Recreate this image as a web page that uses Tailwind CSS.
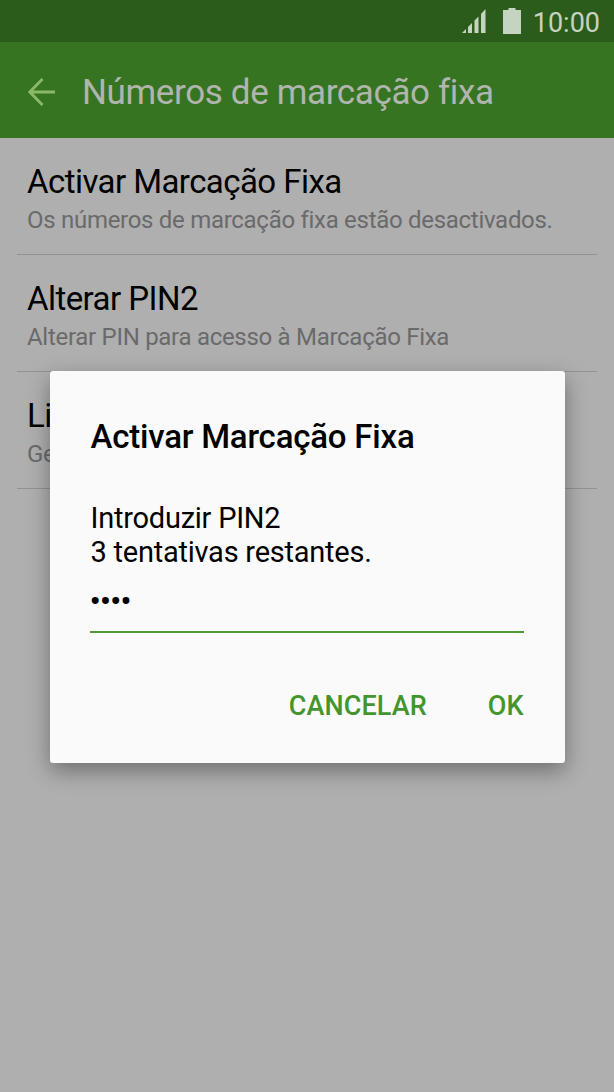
<!DOCTYPE html>
<html lang="pt">
<head>
<meta charset="utf-8">
<script src="https://cdn.jsdelivr.net/npm/@tailwindcss/browser@4"></script>
</head>
<body class="bg-[#afafaf] font-['Roboto',sans-serif] text-black">
<div class="relative h-[1092px] w-[614px] overflow-hidden">
  <div class="flex h-[42px] items-center justify-end bg-[#2b5c1b] pr-[14px] text-[#c5d4c0]">
    <svg class="mr-[17px] h-6 w-6" viewBox="0 0 24 24" fill="currentColor"><path d="M0 24l4-4v4zM6 24v-6l4-4v10zM12.500 24V11.500l4-4V24zM19 24V5l4.500-5v24z"/></svg>
    <svg class="mr-[12px] h-[26px] w-[18px]" viewBox="0 0 18 26" fill="currentColor"><path d="M5.500 0h7v2H18v24H0V2h5.500z"/></svg>
    <span class="pt-[4px] text-[27px]">10:00</span>
  </div>
  <header class="flex h-24 items-center bg-[#367422] pl-[28px] pt-[4px]">
    <svg class="mr-[26px] h-7 w-7" viewBox="0 0 28 28" fill="none" stroke="#8aba68" stroke-width="2.800"><path d="M27 14H2M14.500 1L1.800 14l12.700 13"/></svg>
    <h1 class="pt-[2px] text-[35px] tracking-[-0.37px] text-[#b0b5ad]">Números de marcação fixa</h1>
  </header>
  <main class="px-[17px]">
    <div class="h-[117px] border-b border-[#929292] px-[10px] pt-[24px]"><p class="text-[33px] leading-[40px] tracking-[-0.56px]">Activar Marcação Fixa</p><p class="text-[24px] leading-[36px] tracking-[-0.29px] text-[#6a6a6a]">Os números de marcação fixa estão desactivados.</p></div>
    <div class="h-[117px] border-b border-[#929292] px-[10px] pt-[24px]"><p class="text-[33px] leading-[40px] tracking-[-0.56px]">Alterar PIN2</p><p class="text-[24px] leading-[36px] tracking-[-0.29px] text-[#6a6a6a]">Alterar PIN para acesso à Marcação Fixa</p></div>
    <div class="h-[117px] border-b border-[#929292] px-[10px] pt-[24px]"><p class="text-[33px] leading-[40px] tracking-[-0.56px]">Li</p><p class="text-[24px] leading-[36px] tracking-[-0.29px] text-[#6a6a6a]">Ge</p></div>
  </main>
  <section class="absolute left-[49.5px] top-[371px] h-[392px] w-[515px] rounded-[3px] bg-[#fafafa] px-[41px] pt-[46px] shadow-[0_8px_22px_rgba(0,0,0,0.36)]">
    <h2 class="text-[33px] font-medium leading-[40px] tracking-[-0.2px]">Activar Marcação Fixa</h2>
    <p class="mt-[44px] text-[29px] leading-[34px] tracking-[-0.24px]">Introduzir PIN2<br>3 tentativas restantes.</p>
    <div class="-ml-px flex h-[64px] items-center border-b-2 border-[#4f9a38] pt-[2px] text-[34px] leading-[40px] tracking-[-1.2px]">••••</div>
    <div class="mt-[53px] flex justify-end gap-[61px] text-[27px] font-medium leading-[40px] text-[#43962e]"><span class="tracking-[0.1px]">CANCELAR</span><span>OK</span></div>
  </section>
</div>
</body>
</html>
